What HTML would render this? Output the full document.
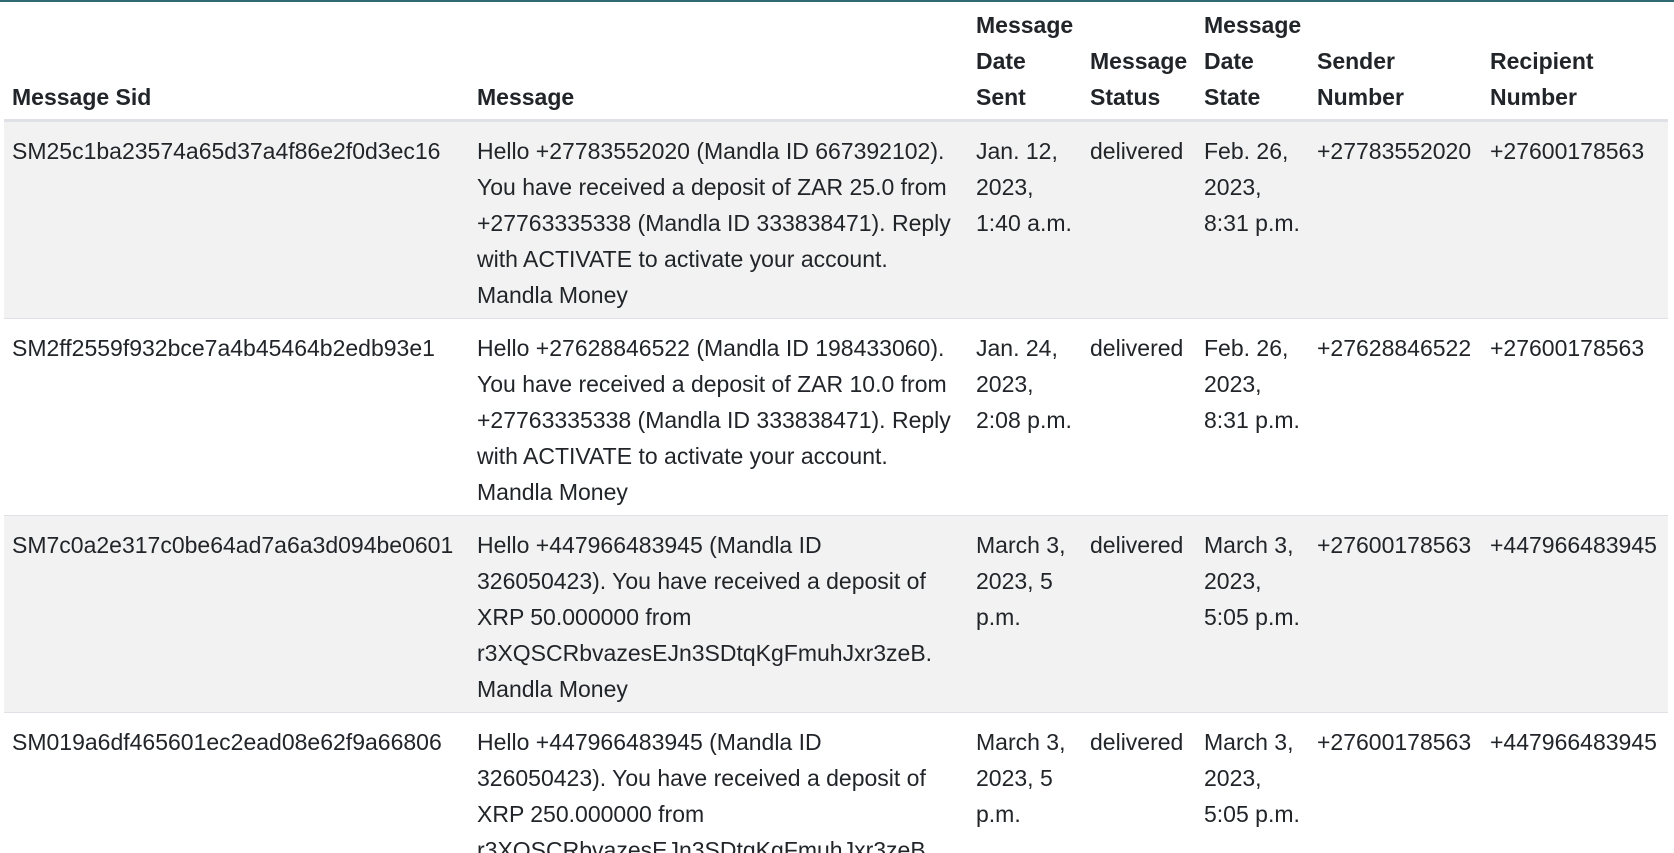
<!DOCTYPE html>
<html><head><meta charset="utf-8"><style>
html,body{margin:0;padding:0;background:#fff;width:1674px;height:853px;overflow:hidden}
body{border-top:2px solid #2f6b70;box-sizing:border-box;font-family:"Liberation Sans",sans-serif;font-size:23px;color:#212529}
table{border-collapse:collapse;margin-left:4px;width:1664px;table-layout:fixed}
th,td{padding:11px 8px 5px;line-height:36px;white-space:nowrap;text-align:left;vertical-align:top;overflow:hidden}
th{vertical-align:bottom;font-weight:bold;padding:5px 8px 4px}
thead tr{border-bottom:3px solid #dee2e6}
tbody tr{border-bottom:1px solid #dee2e6}
tbody tr:nth-child(odd){background:#f2f2f2}
</style></head><body>
<table>
<colgroup><col style="width:465px"><col style="width:499px"><col style="width:114px"><col style="width:114px"><col style="width:113px"><col style="width:173px"><col style="width:186px"></colgroup>
<thead><tr><th>Message Sid</th><th>Message</th><th>Message<br>Date<br>Sent</th><th>Message<br>Status</th><th>Message<br>Date<br>State</th><th>Sender<br>Number</th><th>Recipient<br>Number</th></tr></thead>
<tbody>
<tr><td>SM25c1ba23574a65d37a4f86e2f0d3ec16</td><td>Hello +27783552020 (Mandla ID 667392102).<br>You have received a deposit of ZAR 25.0 from<br>+27763335338 (Mandla ID 333838471). Reply<br>with ACTIVATE to activate your account.<br>Mandla Money</td><td>Jan. 12,<br>2023,<br>1:40 a.m.</td><td>delivered</td><td>Feb. 26,<br>2023,<br>8:31 p.m.</td><td>+27783552020</td><td>+27600178563</td></tr>
<tr><td>SM2ff2559f932bce7a4b45464b2edb93e1</td><td>Hello +27628846522 (Mandla ID 198433060).<br>You have received a deposit of ZAR 10.0 from<br>+27763335338 (Mandla ID 333838471). Reply<br>with ACTIVATE to activate your account.<br>Mandla Money</td><td>Jan. 24,<br>2023,<br>2:08 p.m.</td><td>delivered</td><td>Feb. 26,<br>2023,<br>8:31 p.m.</td><td>+27628846522</td><td>+27600178563</td></tr>
<tr><td>SM7c0a2e317c0be64ad7a6a3d094be0601</td><td>Hello +447966483945 (Mandla ID<br>326050423). You have received a deposit of<br>XRP 50.000000 from<br>r3XQSCRbvazesEJn3SDtqKgFmuhJxr3zeB.<br>Mandla Money</td><td>March 3,<br>2023, 5<br>p.m.</td><td>delivered</td><td>March 3,<br>2023,<br>5:05 p.m.</td><td>+27600178563</td><td>+447966483945</td></tr>
<tr><td>SM019a6df465601ec2ead08e62f9a66806</td><td>Hello +447966483945 (Mandla ID<br>326050423). You have received a deposit of<br>XRP 250.000000 from<br>r3XQSCRbvazesEJn3SDtqKgFmuhJxr3zeB.<br>Mandla Money</td><td>March 3,<br>2023, 5<br>p.m.</td><td>delivered</td><td>March 3,<br>2023,<br>5:05 p.m.</td><td>+27600178563</td><td>+447966483945</td></tr>
</tbody></table>
</body></html>
